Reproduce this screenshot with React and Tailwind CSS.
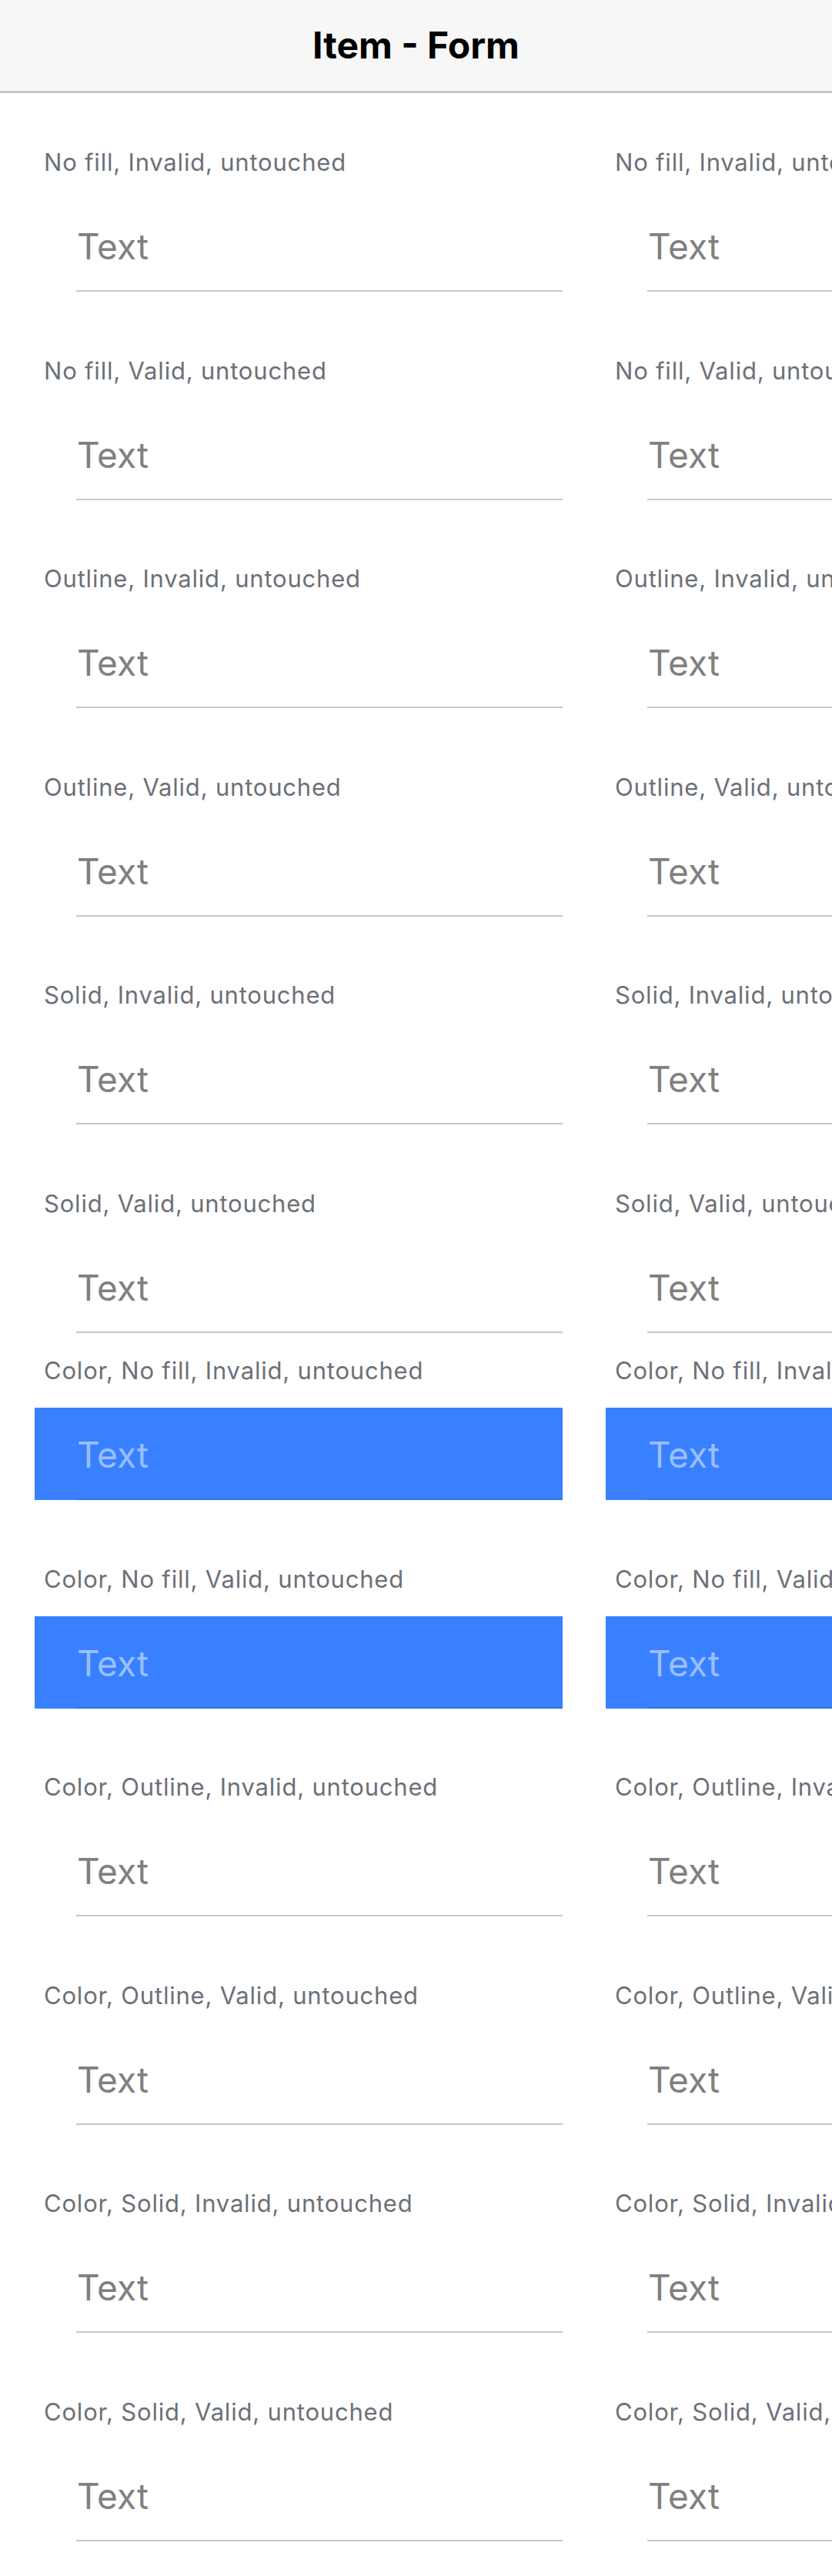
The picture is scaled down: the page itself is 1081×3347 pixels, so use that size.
const ITEMS = [
  { label: 'No fill, Invalid, untouched' },
  { label: 'No fill, Valid, untouched' },
  { label: 'Outline, Invalid, untouched' },
  { label: 'Outline, Valid, untouched' },
  { label: 'Solid, Invalid, untouched' },
  { label: 'Solid, Valid, untouched' },
  { label: 'Color, No fill, Invalid, untouched', color: true, tight: true },
  { label: 'Color, No fill, Valid, untouched', color: true },
  { label: 'Color, Outline, Invalid, untouched' },
  { label: 'Color, Outline, Valid, untouched' },
  { label: 'Color, Solid, Invalid, untouched' },
  { label: 'Color, Solid, Valid, untouched' },
]

// one input item: label above, then the row with an inset underline
function Field({ label, color }) {
  return (
    <div className="w-[686px] shrink-0">
      <div className="h-[36px] pl-[12px] text-[31px] leading-[36px] tracking-[0.8px] text-[#6c7078] whitespace-nowrap">
        {label}
      </div>
      <div className={`mt-[30px] h-[120px] ${color ? 'bg-[#3880ff]' : ''}`}>
        <div
          className={`ml-[54px] flex h-full items-center border-b-2 pt-[4px] ${
            color ? 'border-[#3273e6]' : 'border-[#c8c7cc]'
          }`}
        >
          <span className={`pl-[1px] text-[46px] leading-[56px] ${color ? 'text-white/50' : 'text-[#808080]'}`}>
            Text
          </span>
        </div>
      </div>
    </div>
  )
}

export default function App() {
  return (
    <div className="w-[1081px] overflow-hidden bg-white font-['Inter',sans-serif]">
      <header className="flex h-[121px] items-center justify-center border-b-[3px] border-[#c6c6c6] bg-[#f7f7f7]">
        <h1 className="text-[48px] font-bold leading-[56px] text-black">Item - Form</h1>
      </header>
      <div className="pt-[72px] pb-[45px]">
        {ITEMS.map((it, i) => (
          <div
            key={it.label}
            className={`flex gap-[56px] pl-[45px] ${i === 0 ? '' : it.tight ? 'mt-[31.5px]' : 'mt-[84.5px]'}`}
          >
            <Field label={it.label} color={it.color} />
            <Field label={it.label} color={it.color} />
          </div>
        ))}
      </div>
    </div>
  )
}
